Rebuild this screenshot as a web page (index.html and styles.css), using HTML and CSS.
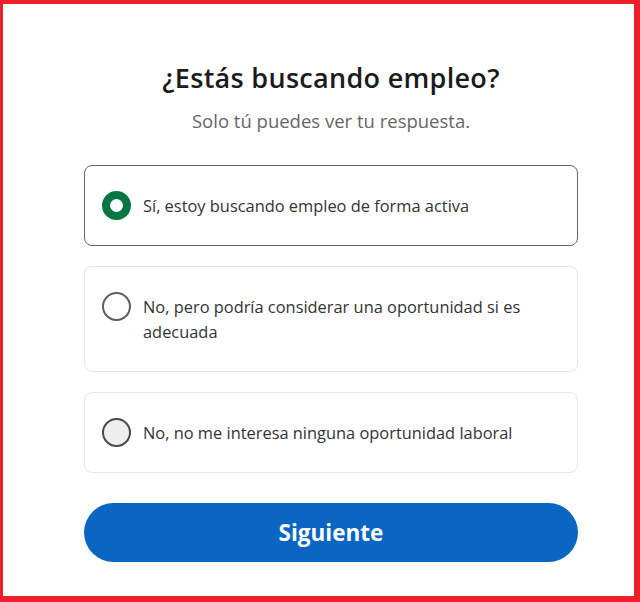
FILE: index.html
```html
<!DOCTYPE html>
<html lang="es">
<head>
<meta charset="utf-8">
<title>¿Estás buscando empleo?</title>
<link rel="stylesheet" href="styles.css">
</head>
<body>
<div class="frame">
  <div class="content">
    <h1 class="title">¿Estás buscando empleo?</h1>
    <p class="subtitle">Solo tú puedes ver tu respuesta.</p>
    <div class="options">
      <label class="option option--selected">
        <span class="radio radio--on"></span>
        <span class="option-text">Sí, estoy buscando empleo de forma activa</span>
      </label>
      <label class="option">
        <span class="radio"></span>
        <span class="option-text">No, pero podría considerar una oportunidad si es adecuada</span>
      </label>
      <label class="option">
        <span class="radio radio--hover"></span>
        <span class="option-text">No, no me interesa ninguna oportunidad laboral</span>
      </label>
    </div>
    <button class="next" type="button">Siguiente</button>
  </div>
</div>
</body>
</html>
```

FILE: styles.css
```css
html, body {
  margin: 0;
  padding: 0;
  background: #ffffff;
}

.frame {
  box-sizing: border-box;
  width: 640px;
  height: 602px;
  border-style: solid;
  border-color: #ee1f2a;
  border-width: 4px 6px 6px 3px;
  padding: 57px 55px 0 81px;
  font-family: "Open Sans", "Noto Sans", sans-serif;
}

.content {
  width: 494px;
  display: flex;
  flex-direction: column;
}

.title {
  margin: 0;
  font-size: 27px;
  line-height: 34px;
  font-weight: 600;
  letter-spacing: 0.3px;
  color: #1b1b1b;
  text-align: center;
}

.subtitle {
  margin: 14px 0 0;
  font-size: 18.5px;
  line-height: 24px;
  color: #666666;
  text-align: center;
}

.options {
  margin-top: 32px;
  display: flex;
  flex-direction: column;
  gap: 20px;
}

.option {
  display: flex;
  align-items: flex-start;
  gap: 12px;
  padding: 27px 18px 27px 17px;
  border: 1px solid #e6e6e6;
  border-radius: 8px;
}

.option--selected {
  border-color: #666666;
}

.option-text {
  font-size: 16.4px;
  line-height: 25px;
  color: #333333;
}

.radio {
  flex: none;
  box-sizing: border-box;
  width: 29px;
  height: 29px;
  margin: -2px 0;
  border: 2px solid #5e5e5e;
  border-radius: 50%;
  background: #ffffff;
}

.radio--hover {
  background: #eeeeee;
  border-color: #4a4a4a;
}

.radio--on {
  border: 8.5px solid #057642;
  background: #ffffff;
}

.next {
  margin-top: 30px;
  height: 59px;
  border: none;
  border-radius: 30px;
  background: #0a66c2;
  color: #ffffff;
  font-family: "Open Sans", "Noto Sans", sans-serif;
  font-size: 22.5px;
  font-weight: 700;
}
```
